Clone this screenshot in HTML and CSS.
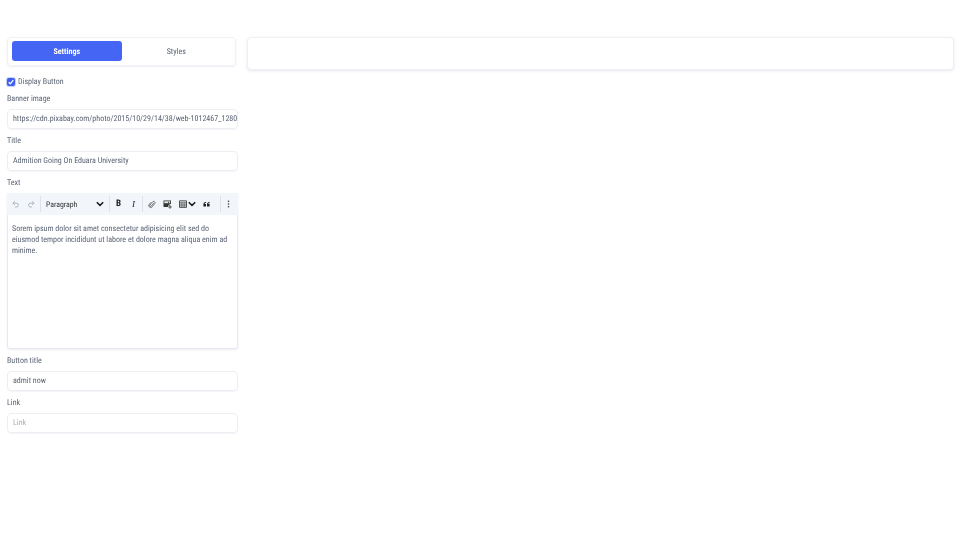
FILE: index.html
```html
<!DOCTYPE html>
<html lang="en">
<head>
<meta charset="utf-8">
<title>Banner settings</title>
<link rel="stylesheet" href="styles.css">
</head>
<body>
<div class="page">
  <aside class="sidebar">
    <div class="tabs">
      <button class="tab tab-active">Settings</button>
      <button class="tab">Styles</button>
    </div>
    <label class="check">
      <span class="checkbox"><svg width="8" height="8" viewBox="0 0 8 8"><path d="M1.7 4.2 3.3 5.8 6.3 2.2" fill="none" stroke="#fff" stroke-width="1.3"/></svg></span>
      Display Button
    </label>
    <div class="field">
      <div class="label">Banner image</div>
      <div class="input">https://cdn.pixabay.com/photo/2015/10/29/14/38/web-1012467_1280.jp</div>
    </div>
    <div class="field">
      <div class="label">Title</div>
      <div class="input">Admition Going On Eduara University</div>
    </div>
    <div class="field">
      <div class="label">Text</div>
      <div class="editor">
        <div class="toolbar">
          <div class="group group-history">
            <svg class="ic" width="8" height="8" viewBox="0 0 8 8"><path d="M1 3.2H5A2 2 0 0 1 5 7H3M2.8 1.2 1 3.2 2.8 5" fill="none" stroke="#a3a9b3" stroke-width=".8"/></svg>
            <svg class="ic" width="8" height="8" viewBox="0 0 8 8"><path d="M7 3.2H3A2 2 0 0 0 3 7H5M5.2 1.2 7 3.2 5.2 5" fill="none" stroke="#a3a9b3" stroke-width=".8"/></svg>
          </div>
          <div class="group group-heading">
            <span class="heading">Paragraph</span>
            <svg width="8" height="6" viewBox="0 0 8 6"><path d="M.8 1.2 4 4.4 7.2 1.2" fill="none" stroke="#1a1a1a" stroke-width="1.5"/></svg>
          </div>
          <div class="group group-format">
            <span class="bold">B</span>
            <span class="italic">I</span>
          </div>
          <div class="group group-insert">
            <svg width="8" height="9" viewBox="0 0 8 9"><path d="M5.8 3 3.2 6.2A.9.9 0 0 1 1.9 5L5 1.5A1.5 1.5 0 0 1 7 3.4L3.6 7.4A2 2 0 0 1 .9 4.8L3 2.3" fill="none" stroke="#444" stroke-width=".7"/></svg>
            <svg width="9" height="9" viewBox="0 0 9 9"><path d="M.5.5H8V4H6.5V5.5H5V7H.5Z" fill="#333"/><path d="M1.3 1.3H7.2V3.2H1.3Z" fill="#e8ebf0"/><circle cx="5.6" cy="2.3" r=".6" fill="#333"/><path d="M7 5V8.8M5.2 7H8.8" stroke="#333" stroke-width=".8"/></svg>
            <span class="table-ic">
              <svg width="8" height="8" viewBox="0 0 8 8"><path d="M.5.8H7.5V7.4H.5Z" fill="#dde0e5" stroke="#333" stroke-width=".8"/><path d="M.5 2.6H7.5M.5 4.2H7.5M.5 5.8H7.5M2.8 2.6V7.4M5.2 2.6V7.4" stroke="#333" stroke-width=".5"/></svg>
              <svg width="8" height="6" viewBox="0 0 8 6"><path d="M.8 1.2 4 4.4 7.2 1.2" fill="none" stroke="#1a1a1a" stroke-width="1.5"/></svg>
            </span>
            <svg width="7" height="6" viewBox="0 0 7 6"><path d="M3 .8C1.2 1.2.4 2.2.4 3.6V5.4H3V3H1.6C1.7 2.3 2.2 1.9 3 1.7ZM6.6.8C4.8 1.2 4 2.2 4 3.6V5.4H6.6V3H5.2C5.3 2.3 5.8 1.9 6.6 1.7Z" fill="#222"/></svg>
          </div>
          <div class="group group-more">
            <svg width="3" height="8" viewBox="0 0 3 8"><g fill="#333"><circle cx="1.5" cy="1.2" r=".8"/><circle cx="1.5" cy="4" r=".8"/><circle cx="1.5" cy="6.8" r=".8"/></g></svg>
          </div>
        </div>
        <div class="editor-body">Sorem ipsum dolor sit amet consectetur adipisicing elit sed do eiusmod tempor incididunt ut labore et dolore magna aliqua enim ad minime.</div>
      </div>
    </div>
    <div class="field">
      <div class="label">Button title</div>
      <div class="input">admit now</div>
    </div>
    <div class="field">
      <div class="label">Link</div>
      <div class="input input-empty">Link</div>
    </div>
  </aside>
  <main class="preview"></main>
</div>
</body>
</html>
```
FILE: styles.css
```css
* { box-sizing: border-box; }
html, body { margin: 0; height: 100%; background: #fff; }
body { font-family: Roboto, "Liberation Sans", sans-serif; font-size: 8px; font-stretch: 75%; color: #5b6474; overflow: hidden; text-rendering: geometricPrecision; }
.page { display: flex; align-items: flex-start; padding: 37px 6px 0 7px; }
.sidebar { width: 231px; flex: none; margin-right: 9px; will-change: transform; }
.preview { flex: 1; height: 33px; border: 1px solid #eef0f5; border-radius: 4px; box-shadow: 0 1px 3px rgba(120,130,160,.18); background: #fff; }
.tabs { width: 229px; height: 29px; display: flex; gap: 0; padding: 3px 4px 4px; border: 1px solid #f0f2f6; border-radius: 4px; box-shadow: 0 1px 2px rgba(120,130,160,.14); }
.tab { flex: 1; border: 0; background: none; padding: 0; font: inherit; color: #5b6474; border-radius: 3px; text-rendering: geometricPrecision; }
.tab-active { background: #4565f5; color: #fff; font-weight: 700; }
.check { display: flex; align-items: center; gap: 3px; margin-top: 11px; height: 10px; line-height: 10px; }
.checkbox { width: 8px; height: 8px; background: #3f5ef0; border-radius: 2px; display: flex; box-shadow: 0 0 0 1px #c6d0fa; }
.field { margin-top: 7px; }
.label { height: 10px; line-height: 10px; }
.input { height: 20px; margin-top: 5px; padding: 0 5px; line-height: 18px; border: 1px solid #eceef3; border-radius: 4px; box-shadow: 0 1px 1px rgba(120,130,160,.08); white-space: nowrap; overflow: hidden; }
.input-empty { color: #a6adbb; }
.editor { margin-top: 5px; height: 156px; border: 1px solid #e6e9ef; border-top: 0; border-radius: 0 0 3px 3px; box-shadow: 0 1px 2px rgba(120,130,160,.14); }
.toolbar { height: 22px; background: #f2f5fa; display: flex; align-items: center; margin: 0 -1px; padding: 0; }
.group { height: 16px; display: flex; align-items: center; border-right: 1px solid #dfe2e8; }
.group-history { width: 34px; padding-left: 5px; gap: 7px; }
.group-heading { width: 69px; padding-left: 5px; justify-content: space-between; padding-right: 5px; }
.heading { color: #333; font-size: 7.8px; }
.group-format { width: 33px; padding-left: 6px; gap: 11px; color: #1d1d1d; font-size: 9px; }
.bold { font-weight: 700; }
.italic { font-family: "Liberation Serif", serif; font-style: italic; }
.group-insert { width: 78px; padding-left: 5px; gap: 7px; border-right-color: #dfe2e8; }
.table-ic { display: flex; align-items: center; gap: 1px; }
.group-more { flex: 1; justify-content: flex-end; padding-right: 8px; border: 0; }
.editor-body { padding: 8px 4px; line-height: 11px; }
```
